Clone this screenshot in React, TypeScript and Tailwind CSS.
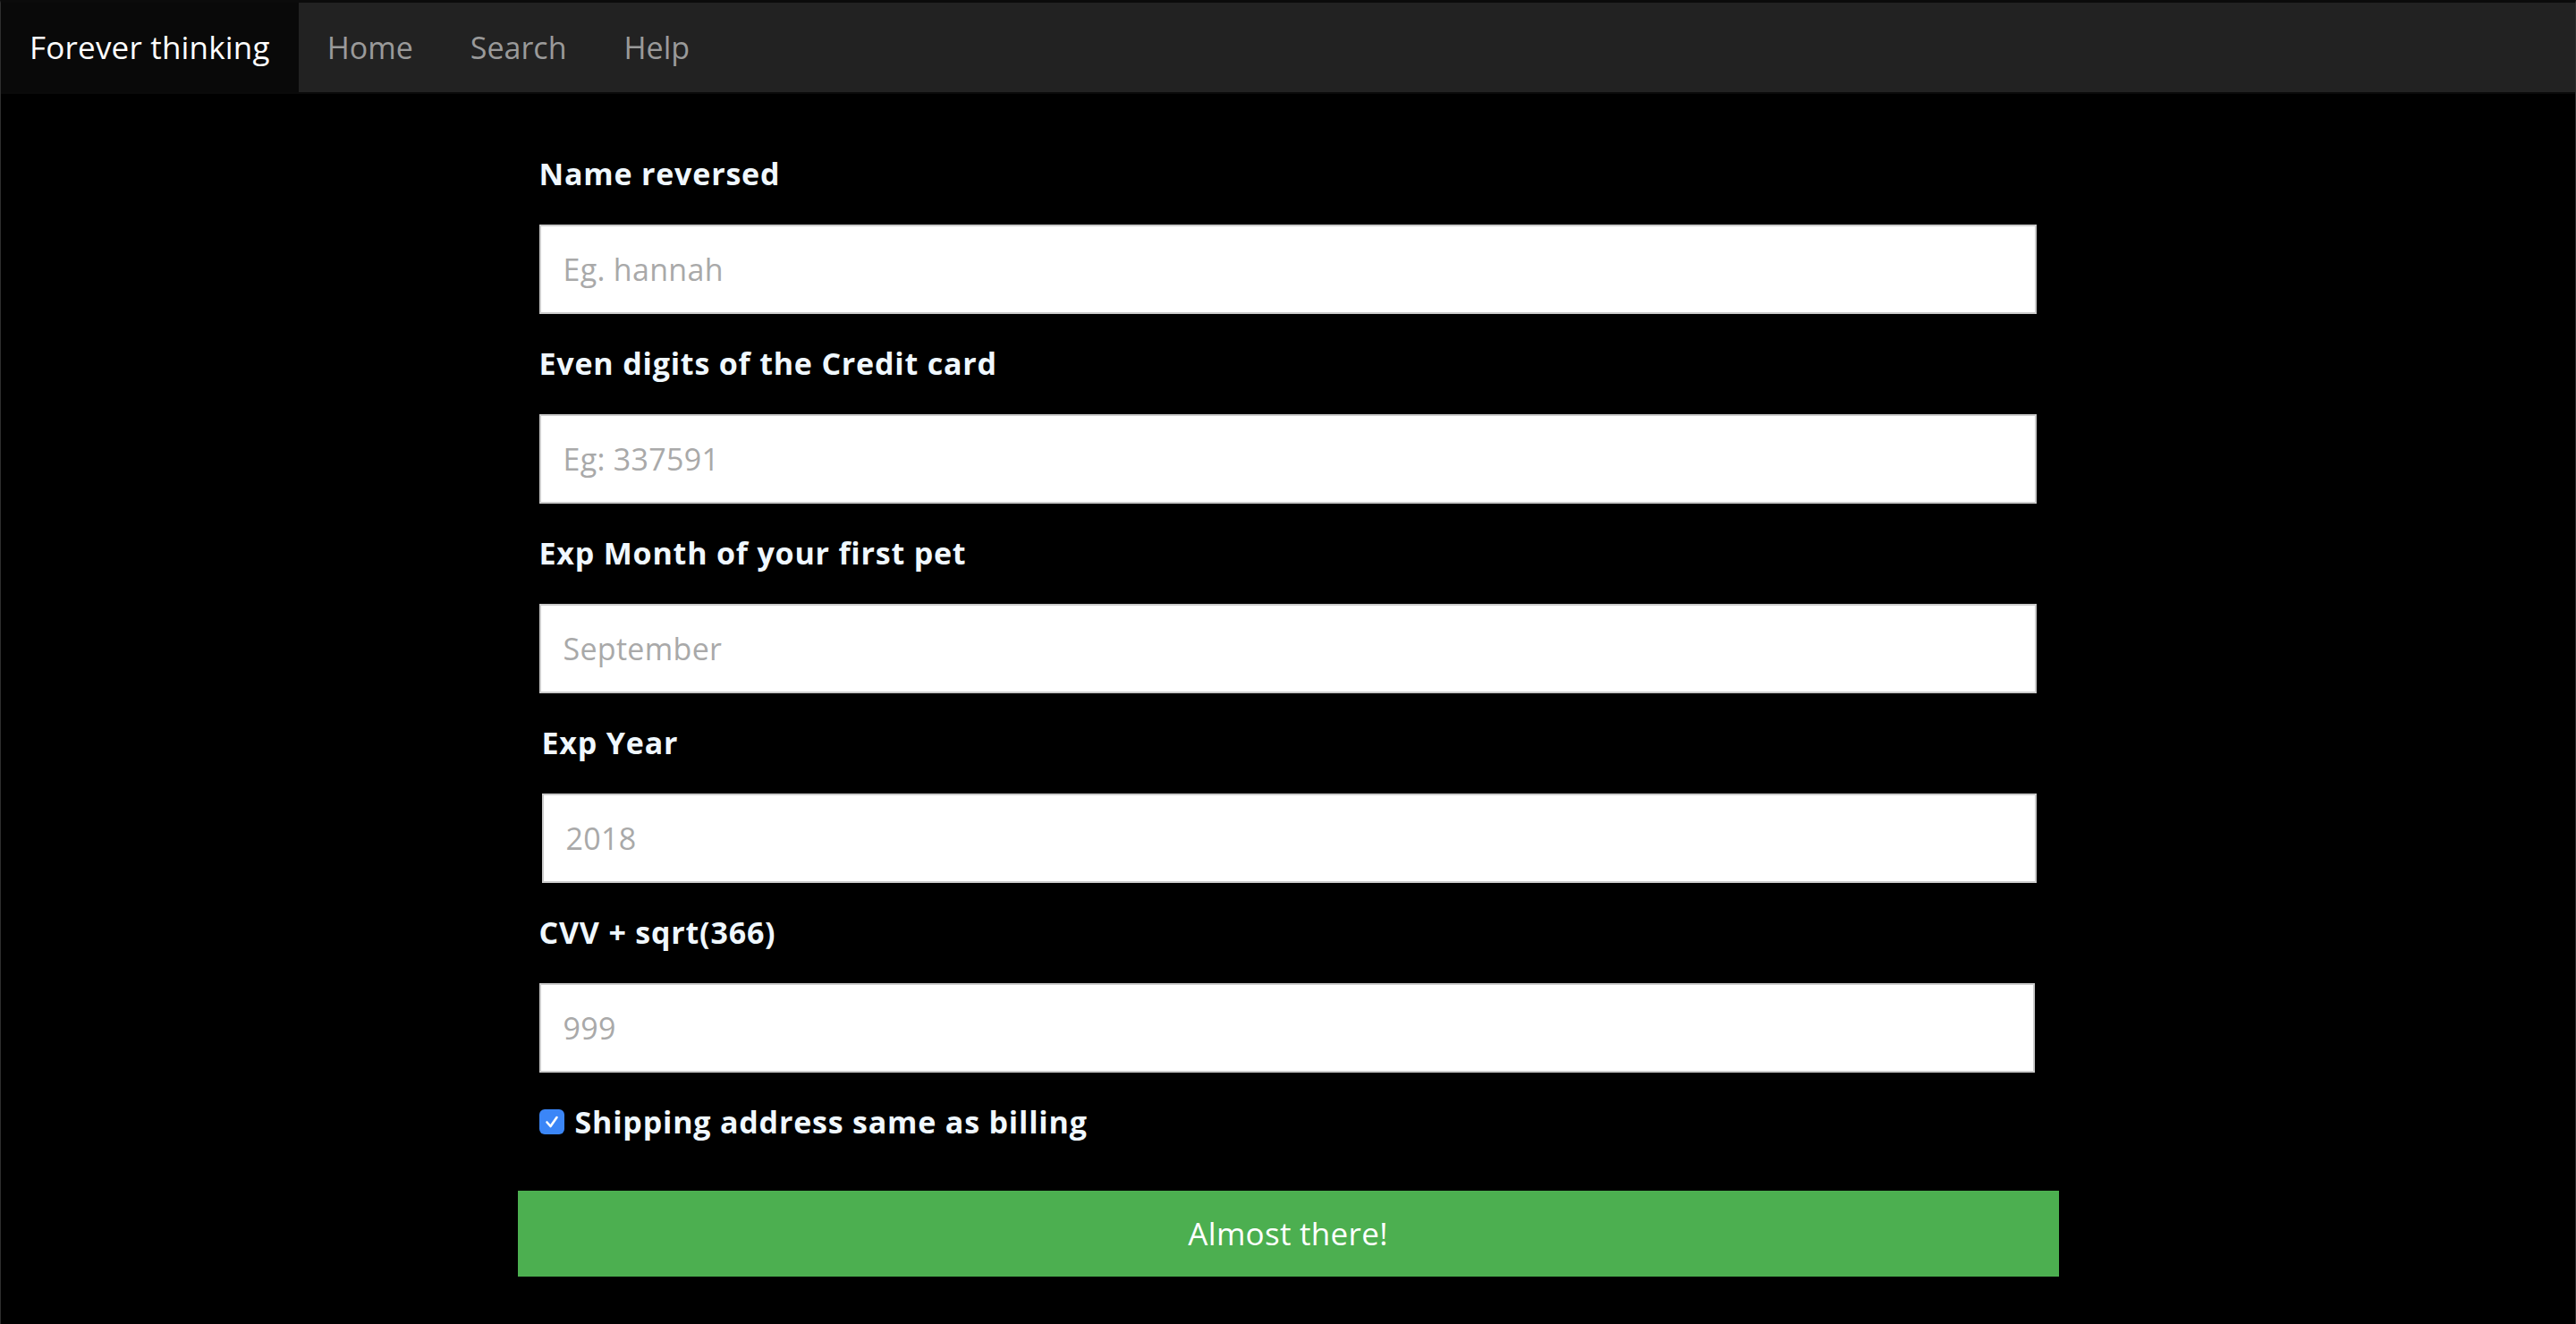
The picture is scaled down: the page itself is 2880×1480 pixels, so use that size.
import React from "react";

const fields = [
  { label: "Name reversed", placeholder: "Eg. hannah", shift: "" },
  { label: "Even digits of the Credit card", placeholder: "Eg: 337591", shift: "" },
  { label: "Exp Month of your first pet", placeholder: "September", shift: "" },
  { label: "Exp Year", placeholder: "2018", shift: "ml-[3px]" },
  { label: "CVV + sqrt(366)", placeholder: "999", shift: "mr-[2px]" },
];

export default function App() {
  return (
    <div className="w-full h-[1480px] bg-black border-x border-x-[#2e2e2e] border-t-[3px] border-t-[#0b0b0b] font-['Open_Sans',sans-serif] overflow-hidden">
      <nav className="flex h-[100px] bg-[#222222] border-b-2 border-b-[#0a0a0a] box-content">
        <a className="flex items-center px-[32px] bg-[#090909] text-white text-[35px] tracking-[0.2px]">Forever thinking</a>
        <a className="flex items-center px-[32px] text-[#9a9a9a] text-[34px]">Home</a>
        <a className="flex items-center px-[32px] text-[#9a9a9a] text-[34px]">Search</a>
        <a className="flex items-center px-[32px] text-[#9a9a9a] text-[34px]">Help</a>
      </nav>
      <form className="w-[1723px] mx-auto pt-[65px] flex flex-col">
        <div className="pl-[24px] pr-[25px] flex flex-col">
          {fields.map((f) => (
            <div key={f.label} className={`flex flex-col ${f.shift}`}>
              <label className="text-[34px] leading-[48px] font-bold tracking-[0.8px] text-[#f0f8ff] mb-[33px]">{f.label}</label>
              <input
                type="text"
                placeholder={f.placeholder}
                className="h-[100px] w-full bg-white border-2 border-[#cccccc] pl-[25px] text-[34px] tracking-[0.3px] text-black placeholder:text-[#a9a9a9] outline-none mb-[31px]"
              />
            </div>
          ))}
          <label className="flex items-center gap-[12px] h-[48px]">
            <span className="w-[28px] h-[28px] rounded-[6px] bg-[#3b86f7] flex items-center justify-center">
              <svg width="18" height="18" viewBox="0 0 18 18" fill="none">
                <path d="M3.5 9.5 L7.5 14 L14.5 4" stroke="white" strokeWidth="2.6" strokeLinecap="round" strokeLinejoin="round" />
              </svg>
            </span>
            <span className="text-[34px] leading-[48px] font-bold tracking-[0.8px] text-[#f0f8ff]">Shipping address same as billing</span>
          </label>
        </div>
        <button type="button" className="mt-[53px] h-[96px] w-full bg-[#4caf50] text-white text-[35px] tracking-[0.3px]">
          Almost there!
        </button>
      </form>
    </div>
  );
}
